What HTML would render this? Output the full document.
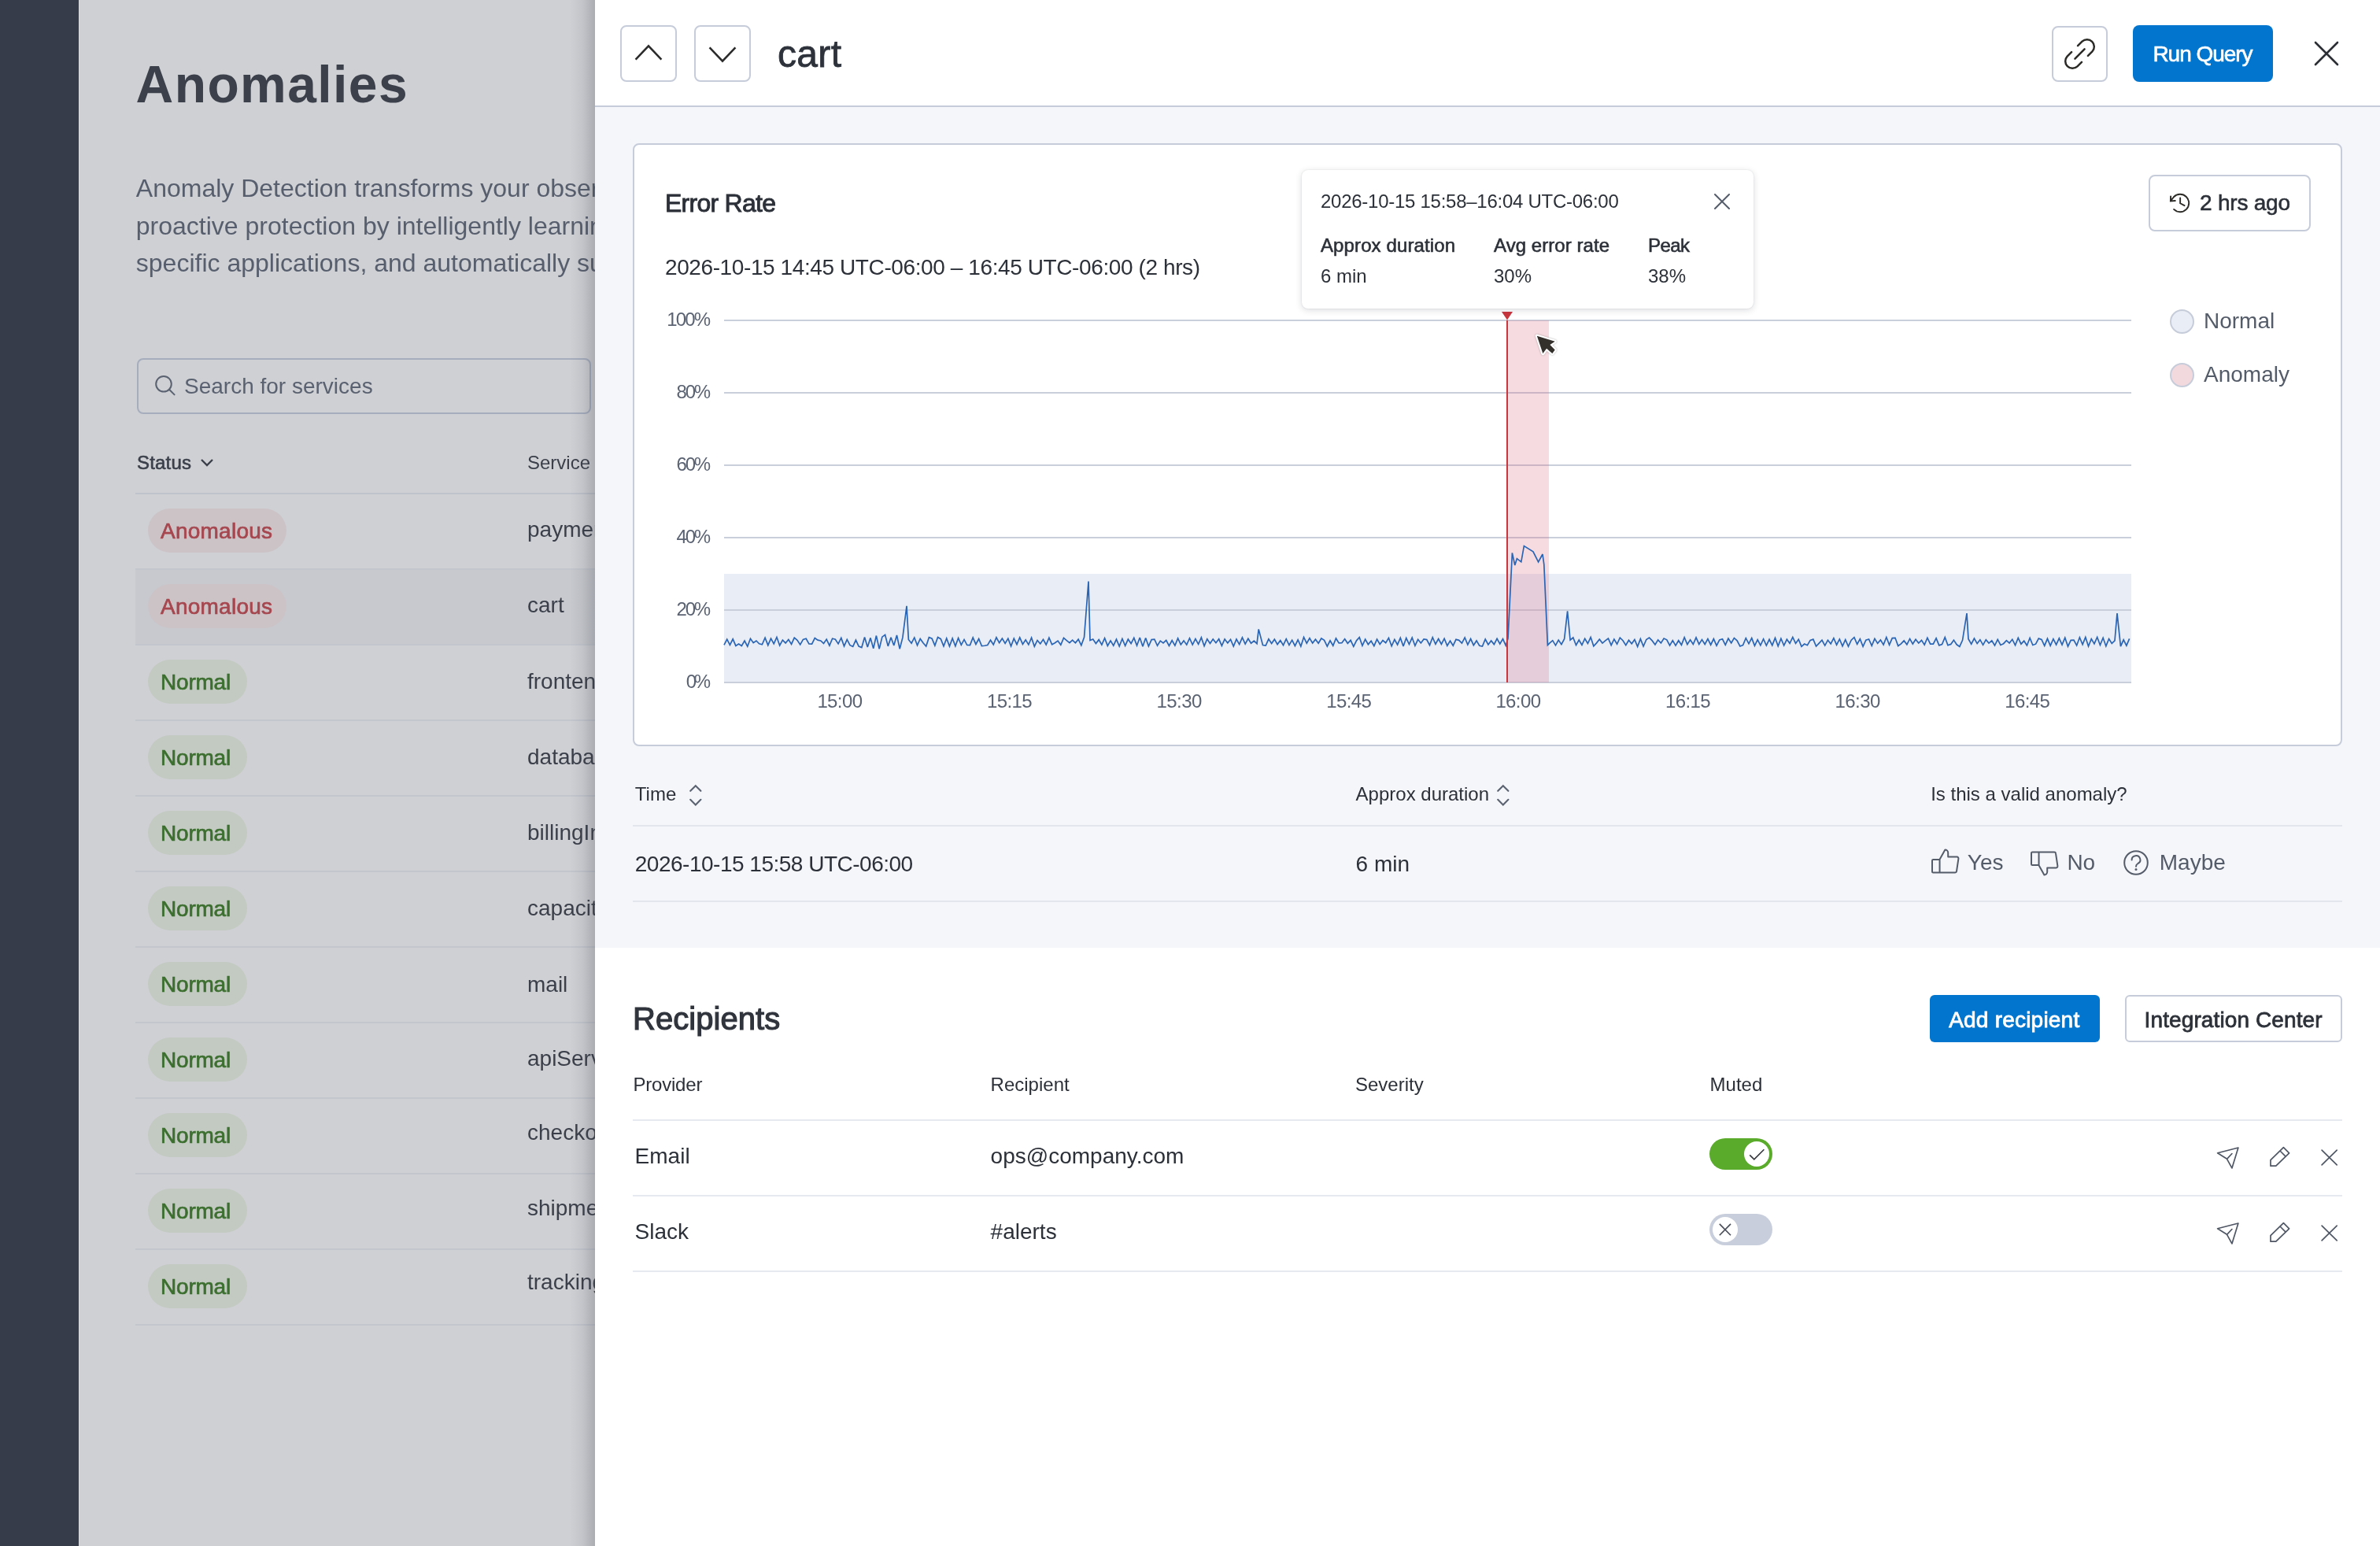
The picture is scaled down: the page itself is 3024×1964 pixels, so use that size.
<!DOCTYPE html><html><head><meta charset="utf-8"><style>
*{margin:0;padding:0;box-sizing:border-box}
html,body{width:100%;height:100%;overflow:hidden;background:#fff}
body{font-family:"Liberation Sans",sans-serif}
#root{zoom:1;position:relative;width:1512px;height:982px;overflow:hidden;will-change:transform}
@media (min-width:2000px){#root{zoom:2}}
.t{position:absolute;white-space:nowrap}
.b{position:absolute}
svg{position:absolute;overflow:visible}
</style></head><body><div id="root"><div class="b" style="left:0px;top:0px;width:50px;height:982px;background:#373c4a"></div>
<div class="b" style="left:50px;top:0px;width:328px;height:982px;background:#cfd0d4"></div>
<div class="b" style="left:50px;top:0px;width:0.5px;height:982px;background:#d9dadd"></div>
<div class="b" style="left:0;top:0;width:378px;height:982px;overflow:hidden"><div class="t" style="left:86.30px;top:37.12px;font-size:33px;line-height:33px;color:#3b404b;font-weight:bold;letter-spacing:0.702px;">Anomalies</div>
<div class="t" style="left:86.40px;top:111.33px;font-size:16px;line-height:16px;color:#575e6d;">Anomaly Detection transforms your observability practice into</div>
<div class="t" style="left:86.40px;top:135.28px;font-size:16px;line-height:16px;color:#575e6d;">proactive protection by intelligently learning the normal behavior of</div>
<div class="t" style="left:86.40px;top:159.23px;font-size:16px;line-height:16px;color:#575e6d;">specific applications, and automatically surfacing meaningful anomalies</div>
<div class="b" style="left:87px;top:227.5px;width:288.5px;height:35.5px;border:1px solid #a6aebe;border-radius:4px"></div>
<svg style="left:98.5px;top:238.5px" width="13" height="13" viewBox="0 0 13 13"><circle cx="5.5" cy="5.4" r="4.9" fill="none" stroke="#5a6170" stroke-width="1.0"/><line x1="9.0" y1="8.9" x2="12.3" y2="12.2" stroke="#5a6170" stroke-width="1.0" stroke-linecap="round"/></svg><div class="t" style="left:117.00px;top:238.27px;font-size:14px;line-height:14px;color:#5a6170;">Search for services</div>
<div class="t" style="left:87.00px;top:287.86px;font-size:12px;line-height:12px;color:#3a3f4a;letter-spacing:0.096px;-webkit-text-stroke:0.3px #3a3f4a;">Status</div>
<svg style="left:127px;top:291px" width="9" height="6" viewBox="0 0 9 6"><polyline points="1,1 4.5,4.5 8,1" fill="none" stroke="#3a3f4a" stroke-width="1.2"/></svg><div class="t" style="left:335.00px;top:287.86px;font-size:12px;line-height:12px;color:#3a3f4a;">Service name</div>
<div class="b" style="left:86px;top:313px;width:292px;height:1px;background:#bfc3cb"></div>
<div class="b" style="left:86px;top:361px;width:292px;height:1px;background:#c3c6cd"></div>
<div class="b" style="left:94px;top:323px;width:88px;height:28px;background:#ccc3c7;border-radius:14px"></div>
<div class="t" style="left:102.00px;top:330.47px;font-size:14px;line-height:14px;color:#a6474f;letter-spacing:0.120px;-webkit-text-stroke:0.35px #a6474f;">Anomalous</div>
<div class="t" style="left:335.00px;top:329.57px;font-size:14px;line-height:14px;color:#3a3f4a;">payment</div>
<div class="b" style="left:86px;top:362px;width:292px;height:47px;background:#c7c9ce"></div>
<div class="b" style="left:86px;top:409px;width:292px;height:1px;background:#c3c6cd"></div>
<div class="b" style="left:94px;top:371px;width:88px;height:28px;background:#ccc3c7;border-radius:14px"></div>
<div class="t" style="left:102.00px;top:378.47px;font-size:14px;line-height:14px;color:#a6474f;letter-spacing:0.120px;-webkit-text-stroke:0.35px #a6474f;">Anomalous</div>
<div class="t" style="left:335.00px;top:377.37px;font-size:14px;line-height:14px;color:#3a3f4a;">cart</div>
<div class="b" style="left:86px;top:457px;width:292px;height:1px;background:#c3c6cd"></div>
<div class="b" style="left:94px;top:419px;width:63px;height:28px;background:#c3cac2;border-radius:14px"></div>
<div class="t" style="left:102.00px;top:426.47px;font-size:14px;line-height:14px;color:#3c6f2f;letter-spacing:-0.103px;-webkit-text-stroke:0.35px #3c6f2f;">Normal</div>
<div class="t" style="left:335.00px;top:426.17px;font-size:14px;line-height:14px;color:#3a3f4a;">frontend</div>
<div class="b" style="left:86px;top:505px;width:292px;height:1px;background:#c3c6cd"></div>
<div class="b" style="left:94px;top:467px;width:63px;height:28px;background:#c3cac2;border-radius:14px"></div>
<div class="t" style="left:102.00px;top:474.47px;font-size:14px;line-height:14px;color:#3c6f2f;letter-spacing:-0.103px;-webkit-text-stroke:0.35px #3c6f2f;">Normal</div>
<div class="t" style="left:335.00px;top:473.77px;font-size:14px;line-height:14px;color:#3a3f4a;">database</div>
<div class="b" style="left:86px;top:553px;width:292px;height:1px;background:#c3c6cd"></div>
<div class="b" style="left:94px;top:515px;width:63px;height:28px;background:#c3cac2;border-radius:14px"></div>
<div class="t" style="left:102.00px;top:522.47px;font-size:14px;line-height:14px;color:#3c6f2f;letter-spacing:-0.103px;-webkit-text-stroke:0.35px #3c6f2f;">Normal</div>
<div class="t" style="left:335.00px;top:521.77px;font-size:14px;line-height:14px;color:#3a3f4a;">billingInfo</div>
<div class="b" style="left:86px;top:601px;width:292px;height:1px;background:#c3c6cd"></div>
<div class="b" style="left:94px;top:563px;width:63px;height:28px;background:#c3cac2;border-radius:14px"></div>
<div class="t" style="left:102.00px;top:570.47px;font-size:14px;line-height:14px;color:#3c6f2f;letter-spacing:-0.103px;-webkit-text-stroke:0.35px #3c6f2f;">Normal</div>
<div class="t" style="left:335.00px;top:569.82px;font-size:14px;line-height:14px;color:#3a3f4a;">capacity</div>
<div class="b" style="left:86px;top:649px;width:292px;height:1px;background:#c3c6cd"></div>
<div class="b" style="left:94px;top:611px;width:63px;height:28px;background:#c3cac2;border-radius:14px"></div>
<div class="t" style="left:102.00px;top:618.47px;font-size:14px;line-height:14px;color:#3c6f2f;letter-spacing:-0.103px;-webkit-text-stroke:0.35px #3c6f2f;">Normal</div>
<div class="t" style="left:335.00px;top:618.67px;font-size:14px;line-height:14px;color:#3a3f4a;">mail</div>
<div class="b" style="left:86px;top:697px;width:292px;height:1px;background:#c3c6cd"></div>
<div class="b" style="left:94px;top:659px;width:63px;height:28px;background:#c3cac2;border-radius:14px"></div>
<div class="t" style="left:102.00px;top:666.47px;font-size:14px;line-height:14px;color:#3c6f2f;letter-spacing:-0.103px;-webkit-text-stroke:0.35px #3c6f2f;">Normal</div>
<div class="t" style="left:335.00px;top:665.47px;font-size:14px;line-height:14px;color:#3a3f4a;">apiServer</div>
<div class="b" style="left:86px;top:745px;width:292px;height:1px;background:#c3c6cd"></div>
<div class="b" style="left:94px;top:707px;width:63px;height:28px;background:#c3cac2;border-radius:14px"></div>
<div class="t" style="left:102.00px;top:714.47px;font-size:14px;line-height:14px;color:#3c6f2f;letter-spacing:-0.103px;-webkit-text-stroke:0.35px #3c6f2f;">Normal</div>
<div class="t" style="left:335.00px;top:712.57px;font-size:14px;line-height:14px;color:#3a3f4a;">checkout</div>
<div class="b" style="left:86px;top:793px;width:292px;height:1px;background:#c3c6cd"></div>
<div class="b" style="left:94px;top:755px;width:63px;height:28px;background:#c3cac2;border-radius:14px"></div>
<div class="t" style="left:102.00px;top:762.47px;font-size:14px;line-height:14px;color:#3c6f2f;letter-spacing:-0.103px;-webkit-text-stroke:0.35px #3c6f2f;">Normal</div>
<div class="t" style="left:335.00px;top:760.57px;font-size:14px;line-height:14px;color:#3a3f4a;">shipment</div>
<div class="b" style="left:86px;top:841px;width:292px;height:1px;background:#c3c6cd"></div>
<div class="b" style="left:94px;top:803px;width:63px;height:28px;background:#c3cac2;border-radius:14px"></div>
<div class="t" style="left:102.00px;top:810.47px;font-size:14px;line-height:14px;color:#3c6f2f;letter-spacing:-0.103px;-webkit-text-stroke:0.35px #3c6f2f;">Normal</div>
<div class="t" style="left:335.00px;top:807.57px;font-size:14px;line-height:14px;color:#3a3f4a;">tracking</div>
</div><div class="b" style="left:362px;top:0px;width:16px;height:982px;background:linear-gradient(90deg,rgba(60,64,75,0) 0%,rgba(60,64,75,0.08) 50%,rgba(60,64,75,0.25) 100%)"></div>
<div class="b" style="left:378px;top:0px;width:1134px;height:982px;background:#fff"></div>
<div class="b" style="left:378px;top:68px;width:1134px;height:534px;background:#f5f6fa"></div>
<div class="b" style="left:378px;top:67px;width:1134px;height:1px;background:#c6ccd9"></div>
<div class="b" style="left:394px;top:16px;width:36px;height:36px;border:1px solid #c6ccd9;border-radius:4px;background:#fff"></div>
<div class="b" style="left:441px;top:16px;width:36px;height:36px;border:1px solid #c6ccd9;border-radius:4px;background:#fff"></div>
<svg style="left:394px;top:16px" width="36" height="36"><polyline points="9.8,21.8 18,13.2 26.2,21.8" fill="none" stroke="#2b2b2b" stroke-width="1.3"/></svg><svg style="left:441px;top:16px" width="36" height="36"><polyline points="9.8,14.2 18,22.8 26.2,14.2" fill="none" stroke="#2b2b2b" stroke-width="1.3"/></svg><div class="t" style="left:494.00px;top:22.52px;font-size:24px;line-height:24px;color:#2d323b;letter-spacing:0.164px;-webkit-text-stroke:0.4px #2d323b;">cart</div>
<div class="b" style="left:1303.5px;top:16.4px;width:35.5px;height:35.5px;border:1px solid #c6ccd9;border-radius:4px;background:#fff"></div>
<svg style="left:1303.5px;top:16.4px" width="36" height="36"><path d="M16.51 12.55 L19.27 9.80 A4.55 4.55 0 0 1 25.70 16.23 L22.95 18.99 M18.99 22.95 L16.23 25.70 A4.55 4.55 0 0 1 9.80 19.27 L12.55 16.51 M14.71 20.79 L20.79 14.71" fill="none" stroke="#2b2a26" stroke-width="1.25" stroke-linecap="round"/></svg><div class="b" style="left:1355px;top:16px;width:89px;height:36px;background:#0276cf;border-radius:4px"></div>
<div class="t" style="left:1367.70px;top:27.27px;font-size:14px;line-height:14px;color:#ffffff;letter-spacing:-0.512px;-webkit-text-stroke:0.3px #ffffff;">Run Query</div>
<svg style="left:1470.5px;top:26.5px" width="15" height="15"><path d="M0.5 0.5 L14.5 14.5 M14.5 0.5 L0.5 14.5" stroke="#2b2e34" stroke-width="1.3" stroke-linecap="round"/></svg><div class="b" style="left:402px;top:91px;width:1086px;height:383px;background:#fff;border:1px solid #c6ccd9;border-radius:4px"></div>
<div class="t" style="left:422.50px;top:120.78px;font-size:16px;line-height:16px;color:#2c3038;letter-spacing:-0.366px;-webkit-text-stroke:0.45px #2c3038;">Error Rate</div>
<div class="t" style="left:422.50px;top:163.17px;font-size:14px;line-height:14px;color:#2c3038;letter-spacing:-0.200px;">2026-10-15 14:45 UTC-06:00 – 16:45 UTC-06:00 (2 hrs)</div>
<div class="t" style="left:423.67px;top:197.01px;font-size:12px;line-height:12px;color:#5b6373;letter-spacing:-0.921px;">100%</div>
<div class="t" style="left:429.74px;top:243.01px;font-size:12px;line-height:12px;color:#5b6373;letter-spacing:-1.081px;">80%</div>
<div class="t" style="left:429.74px;top:289.01px;font-size:12px;line-height:12px;color:#5b6373;letter-spacing:-1.081px;">60%</div>
<div class="t" style="left:429.74px;top:335.01px;font-size:12px;line-height:12px;color:#5b6373;letter-spacing:-1.081px;">40%</div>
<div class="t" style="left:429.74px;top:381.01px;font-size:12px;line-height:12px;color:#5b6373;letter-spacing:-1.081px;">20%</div>
<div class="t" style="left:435.82px;top:427.01px;font-size:12px;line-height:12px;color:#5b6373;letter-spacing:-1.561px;">0%</div>
<div class="b" style="left:460px;top:364.3px;width:894px;height:68.94999999999999px;background:#e9edf5"></div>
<div class="b" style="left:460px;top:202.75px;width:894px;height:1px;background:#c9cfdb"></div>
<div class="b" style="left:460px;top:248.75px;width:894px;height:1px;background:#c9cfdb"></div>
<div class="b" style="left:460px;top:294.75px;width:894px;height:1px;background:#c9cfdb"></div>
<div class="b" style="left:460px;top:340.75px;width:894px;height:1px;background:#c9cfdb"></div>
<div class="b" style="left:460px;top:386.75px;width:894px;height:1px;background:#c9cfdb"></div>
<div class="b" style="left:460px;top:432.75px;width:894px;height:1px;background:#c9cfdb"></div>
<div class="b" style="left:957.5px;top:203.5px;width:26.4px;height:229.75px;background:rgba(214,96,120,0.22)"></div>
<div class="t" style="left:519.19px;top:439.26px;font-size:12px;line-height:12px;color:#5b6373;letter-spacing:-0.300px;">15:00</div>
<div class="t" style="left:626.99px;top:439.26px;font-size:12px;line-height:12px;color:#5b6373;letter-spacing:-0.300px;">15:15</div>
<div class="t" style="left:734.79px;top:439.26px;font-size:12px;line-height:12px;color:#5b6373;letter-spacing:-0.300px;">15:30</div>
<div class="t" style="left:842.59px;top:439.26px;font-size:12px;line-height:12px;color:#5b6373;letter-spacing:-0.300px;">15:45</div>
<div class="t" style="left:950.19px;top:439.26px;font-size:12px;line-height:12px;color:#5b6373;letter-spacing:-0.300px;">16:00</div>
<div class="t" style="left:1057.99px;top:439.26px;font-size:12px;line-height:12px;color:#5b6373;letter-spacing:-0.300px;">16:15</div>
<div class="t" style="left:1165.79px;top:439.26px;font-size:12px;line-height:12px;color:#5b6373;letter-spacing:-0.300px;">16:30</div>
<div class="t" style="left:1273.59px;top:439.26px;font-size:12px;line-height:12px;color:#5b6373;letter-spacing:-0.300px;">16:45</div>
<svg style="left:0;top:0" width="1512" height="982"><polyline points="460.00,409.65 461.86,406.02 463.72,409.71 465.58,405.91 467.44,410.21 469.30,409.03 471.16,410.25 473.02,407.04 474.88,410.62 476.74,405.66 478.60,408.33 480.46,407.00 482.32,408.88 484.18,409.42 486.04,405.11 487.90,409.84 489.76,405.55 491.62,408.97 493.48,404.74 495.34,410.00 497.20,406.59 499.06,408.46 500.92,406.18 502.78,409.23 504.64,405.10 506.50,406.64 508.36,409.43 510.22,406.19 512.08,405.62 513.94,408.95 515.80,409.10 517.66,405.31 519.52,406.55 521.38,407.00 523.24,408.72 525.10,406.06 526.96,410.06 528.82,405.59 530.68,406.13 532.54,408.95 534.40,405.20 536.26,410.43 538.12,406.19 539.98,409.85 541.84,410.68 543.70,406.52 545.56,410.54 547.42,411.26 549.28,404.71 551.14,411.01 553.00,405.19 554.86,411.86 556.72,403.78 558.58,412.19 560.44,404.58 562.30,403.21 564.16,410.44 566.02,404.91 567.88,409.96 569.74,403.49 571.60,412.11 573.46,404.97 576.00,384.95 577.18,406.25 579.04,408.61 580.90,404.99 582.76,409.88 584.62,405.73 586.48,408.38 588.34,410.49 590.20,404.82 592.06,405.61 593.92,410.06 595.78,404.73 597.64,405.83 599.50,410.47 601.36,405.45 603.22,410.50 605.08,405.49 606.94,410.40 608.80,405.24 610.66,409.68 612.52,406.22 614.38,409.77 616.24,409.84 618.10,405.02 619.96,409.23 621.82,405.74 623.68,410.32 625.54,410.11 627.40,409.75 629.26,406.59 631.12,409.50 632.98,404.92 634.84,408.32 636.70,405.51 638.56,408.70 640.42,405.55 642.28,410.45 644.14,405.54 646.00,409.34 647.86,404.94 649.72,409.22 651.58,406.38 653.44,409.49 655.30,405.10 657.16,410.59 659.02,406.74 660.88,408.96 662.74,406.15 664.60,409.49 666.46,405.12 668.32,409.39 670.18,408.37 672.04,407.04 673.90,409.67 675.76,405.23 677.62,406.82 679.48,408.35 681.34,406.57 683.20,408.41 685.06,406.07 686.92,409.88 688.78,404.83 691.50,369.31 692.50,406.71 694.36,406.00 696.22,408.73 698.08,406.31 699.94,409.55 701.80,405.32 703.66,410.21 705.52,406.93 707.38,410.04 709.24,406.05 711.10,410.49 712.96,405.77 714.82,410.22 716.68,406.03 718.54,408.79 720.40,405.17 722.26,410.03 724.12,404.97 725.98,410.66 727.84,405.24 729.70,410.49 731.56,406.30 733.42,406.08 735.28,410.15 737.14,407.08 739.00,408.45 740.86,406.73 742.72,410.20 744.58,406.79 746.44,410.04 748.30,405.48 750.16,409.48 752.02,406.94 753.88,409.57 755.74,405.38 757.60,409.56 759.46,405.79 761.32,409.22 763.18,404.97 765.04,410.35 766.90,405.88 768.76,408.78 770.62,405.93 772.48,408.36 774.34,405.90 776.20,410.23 778.06,405.96 779.92,408.45 781.78,406.15 783.64,410.53 785.50,406.00 787.36,409.34 789.22,404.97 791.08,409.06 792.94,405.65 794.80,408.61 796.66,407.09 798.52,408.84 799.60,399.67 802.24,409.79 804.10,410.06 805.96,405.91 807.82,408.77 809.68,406.09 811.54,409.29 813.40,406.76 815.26,409.82 817.12,405.87 818.98,409.77 820.84,406.58 822.70,410.25 824.56,406.38 826.42,410.52 828.28,404.73 830.14,408.62 832.00,405.39 833.86,408.53 835.72,406.13 837.58,408.60 839.44,405.49 841.30,406.66 843.16,410.50 845.02,406.87 846.88,410.13 848.74,405.49 850.60,408.47 852.46,408.39 854.32,405.90 856.18,408.65 858.04,406.65 859.90,410.69 861.76,406.91 863.62,404.85 865.48,410.14 867.34,406.02 869.20,409.33 871.06,407.11 872.92,410.33 874.78,406.05 876.64,409.27 878.50,406.75 880.36,408.33 882.22,405.21 884.08,410.37 885.94,406.17 887.80,409.51 889.66,405.20 891.52,410.50 893.38,405.27 895.24,409.27 897.10,405.02 898.96,410.15 900.82,406.17 902.68,408.47 904.54,406.01 906.40,406.29 908.26,409.80 910.12,404.86 911.98,409.11 913.84,405.77 915.70,409.24 917.56,405.59 919.42,410.13 921.28,407.09 923.14,410.08 925.00,406.18 926.86,406.67 928.72,408.53 930.58,404.96 932.44,409.52 934.30,405.77 936.16,409.84 938.02,406.96 939.88,410.13 941.74,410.54 943.60,406.01 945.46,409.49 947.32,407.00 949.18,409.31 951.04,405.70 952.90,408.99 954.76,405.79 956.62,410.03 958.00,405.60 960.70,351.20 962.40,359.00 963.70,354.80 966.40,356.90 968.20,346.80 974.00,350.40 977.30,357.00 980.00,352.00 980.90,358.60 983.20,409.80 984.52,408.42 986.38,406.84 988.24,409.91 990.10,406.51 991.96,409.31 993.82,405.86 995.80,388.17 997.54,406.57 999.40,404.99 1001.26,409.80 1003.12,406.49 1004.98,409.66 1006.84,405.62 1008.70,408.75 1010.56,404.78 1012.42,410.42 1014.28,408.44 1016.14,406.12 1018.00,408.54 1019.86,406.97 1021.72,405.51 1023.58,409.82 1025.44,405.99 1027.30,409.13 1029.16,405.12 1031.02,406.86 1032.88,409.80 1034.74,406.63 1036.60,408.92 1038.46,406.25 1040.32,410.68 1042.18,405.82 1044.04,410.52 1045.90,406.25 1047.76,405.03 1049.62,406.94 1051.48,409.47 1053.34,406.42 1055.20,408.48 1057.06,405.55 1058.92,406.41 1060.78,409.97 1062.64,406.80 1064.50,410.05 1066.36,406.86 1068.22,409.67 1070.08,404.88 1071.94,409.35 1073.80,406.41 1075.66,409.26 1077.52,404.98 1079.38,409.17 1081.24,406.27 1083.10,409.23 1084.96,405.78 1086.82,409.60 1088.68,405.79 1090.54,410.13 1092.40,406.47 1094.26,405.90 1096.12,409.67 1097.98,405.57 1099.84,408.45 1101.70,405.24 1103.56,406.95 1105.42,410.47 1107.28,409.83 1109.14,405.34 1111.00,408.89 1112.86,405.30 1114.72,410.14 1116.58,406.33 1118.44,409.92 1120.30,405.85 1122.16,410.01 1124.02,406.15 1125.88,409.91 1127.74,405.20 1129.60,410.44 1131.46,405.60 1133.32,410.01 1135.18,406.13 1137.04,408.65 1138.90,404.75 1140.76,408.70 1142.62,406.12 1144.48,410.64 1146.34,409.04 1148.20,409.86 1150.06,406.71 1151.92,406.04 1153.78,410.49 1155.64,408.56 1157.50,406.62 1159.36,410.03 1161.22,406.60 1163.08,408.97 1164.94,405.32 1166.80,409.62 1168.66,405.99 1170.52,410.44 1172.38,406.32 1174.24,410.61 1176.10,406.61 1177.96,404.86 1179.82,409.22 1181.68,405.90 1183.54,410.69 1185.40,406.57 1187.26,406.00 1189.12,410.22 1190.98,405.68 1192.84,408.67 1194.70,406.52 1196.56,409.54 1198.42,404.75 1200.28,409.59 1202.14,405.28 1204.00,405.16 1205.86,410.28 1207.72,408.95 1209.58,406.91 1211.44,409.43 1213.30,405.73 1215.16,409.03 1217.02,406.14 1218.88,408.51 1220.74,406.64 1222.60,409.56 1224.46,405.14 1226.32,409.05 1228.18,409.03 1230.04,405.42 1231.90,409.95 1233.76,409.25 1235.62,404.81 1237.48,409.87 1239.34,409.21 1241.20,406.57 1243.06,409.40 1244.92,410.69 1246.78,406.65 1249.50,389.55 1250.50,405.84 1252.36,409.11 1254.22,405.53 1256.08,408.78 1257.94,406.35 1259.80,409.65 1261.66,406.34 1263.52,408.52 1265.38,406.92 1267.24,410.01 1269.10,406.17 1270.96,409.73 1272.82,408.84 1274.68,406.85 1276.54,408.47 1278.40,406.11 1280.26,409.86 1282.12,405.16 1283.98,409.10 1285.84,407.11 1287.70,409.99 1289.56,405.24 1291.42,409.76 1293.28,409.09 1295.14,405.57 1297.00,406.23 1298.86,410.20 1300.72,405.67 1302.58,410.15 1304.44,405.82 1306.30,409.50 1308.16,405.42 1310.02,409.54 1311.88,405.13 1313.74,410.58 1315.60,406.67 1317.46,406.55 1319.32,409.98 1321.18,404.90 1323.04,409.41 1324.90,404.79 1326.76,410.48 1328.62,405.79 1330.48,408.93 1332.34,404.75 1334.20,409.75 1336.06,405.15 1337.92,410.46 1339.78,405.76 1341.64,408.74 1343.50,406.96 1345.00,389.55 1347.22,410.56 1349.08,406.40 1350.94,410.08 1352.80,405.72" fill="none" stroke="#2a64b4" stroke-width="0.85" stroke-linejoin="miter" stroke-miterlimit="3"/></svg><div class="b" style="left:956.9px;top:203.5px;width:1.2px;height:229.75px;background:#c8363e"></div>
<svg style="left:953.9px;top:197.9px" width="7" height="7"><polygon points="0,0 7,0 3.5,5.2" fill="#c8363e"/></svg><svg style="left:0;top:0" width="1512" height="982"><path d="M976.43 213.35 L987.86 216.86 L984.69 219.01 L987.86 222.29 L986.16 224.45 L982.54 221.39 L980.17 224.56 Z" fill="#33302c" stroke="#fff" stroke-width="2.1" stroke-linejoin="round" paint-order="stroke" style="filter:drop-shadow(0.2px 0.5px 0.5px rgba(0,0,0,0.3))"/></svg><div class="b" style="left:827px;top:108px;width:287px;height:88px;background:#fff;border-radius:4px;box-shadow:0 1px 4px rgba(30,40,60,0.16),0 0 1px rgba(30,40,60,0.12)"></div>
<div class="t" style="left:839.00px;top:121.76px;font-size:12px;line-height:12px;color:#2c3038;letter-spacing:-0.132px;">2026-10-15 15:58–16:04 UTC-06:00</div>
<svg style="left:1089px;top:123px" width="10" height="10"><path d="M0.5 0.5 L9.5 9.5 M9.5 0.5 L0.5 9.5" stroke="#555c69" stroke-width="1" stroke-linecap="round"/></svg><div class="t" style="left:839.00px;top:149.86px;font-size:12px;line-height:12px;color:#2c3038;letter-spacing:0.055px;-webkit-text-stroke:0.3px #2c3038;">Approx duration</div>
<div class="t" style="left:839.00px;top:169.56px;font-size:12px;line-height:12px;color:#2c3038;">6 min</div>
<div class="t" style="left:949.00px;top:149.86px;font-size:12px;line-height:12px;color:#2c3038;letter-spacing:0.027px;-webkit-text-stroke:0.3px #2c3038;">Avg error rate</div>
<div class="t" style="left:949.00px;top:169.56px;font-size:12px;line-height:12px;color:#2c3038;">30%</div>
<div class="t" style="left:1047.00px;top:149.86px;font-size:12px;line-height:12px;color:#2c3038;letter-spacing:-0.284px;-webkit-text-stroke:0.3px #2c3038;">Peak</div>
<div class="t" style="left:1047.00px;top:169.56px;font-size:12px;line-height:12px;color:#2c3038;">38%</div>
<div class="b" style="left:1365px;top:111px;width:103px;height:36px;background:#fff;border:1px solid #c6ccd9;border-radius:4px"></div>
<svg style="left:1384.9px;top:128.95px" width="1" height="1"><path d="M-4.03 -3.89 A5.6 5.6 0 1 1 -3.96 3.96 M-6.05 -1.3 L-4.03 -3.89 M-5.95 -4.3 L-6.05 -1.3 L-3.1 -1.5 M0.07 -3.3 L0.07 0.14 L2.77 1.57" fill="none" stroke="#2b2a26" stroke-width="0.95" stroke-linecap="round"/></svg><div class="t" style="left:1397.50px;top:122.17px;font-size:14px;line-height:14px;color:#2c3038;letter-spacing:-0.109px;-webkit-text-stroke:0.3px #2c3038;">2 hrs ago</div>
<div class="b" style="left:1378.3px;top:196.3px;width:15.5px;height:15.5px;background:#e9edf5;border:1px solid #c6ccd9;border-radius:50%"></div>
<div class="t" style="left:1400.00px;top:197.17px;font-size:14px;line-height:14px;color:#555c69;">Normal</div>
<div class="b" style="left:1378.3px;top:230.3px;width:15.5px;height:15.5px;background:#f2d9de;border:1px solid #c6ccd9;border-radius:50%"></div>
<div class="t" style="left:1400.00px;top:231.17px;font-size:14px;line-height:14px;color:#555c69;">Anomaly</div>
<div class="t" style="left:403.40px;top:498.66px;font-size:12px;line-height:12px;color:#2c3038;letter-spacing:0.026px;">Time</div>
<svg style="left:438.2px;top:498.4px" width="8" height="14"><polyline points="0.6,3.9 3.9,0.6 7.2,3.9" fill="none" stroke="#5b6270" stroke-width="1.05" stroke-linecap="round"/><polyline points="0.6,9.4 3.9,12.7 7.2,9.4" fill="none" stroke="#5b6270" stroke-width="1.05" stroke-linecap="round"/></svg><div class="t" style="left:861.30px;top:498.66px;font-size:12px;line-height:12px;color:#2c3038;">Approx duration</div>
<svg style="left:951px;top:498.4px" width="8" height="14"><polyline points="0.6,3.9 3.9,0.6 7.2,3.9" fill="none" stroke="#5b6270" stroke-width="1.05" stroke-linecap="round"/><polyline points="0.6,9.4 3.9,12.7 7.2,9.4" fill="none" stroke="#5b6270" stroke-width="1.05" stroke-linecap="round"/></svg><div class="t" style="left:1226.60px;top:498.66px;font-size:12px;line-height:12px;color:#2c3038;">Is this a valid anomaly?</div>
<div class="b" style="left:402px;top:524.2px;width:1086px;height:1px;background:#e3e6ec"></div>
<div class="t" style="left:403.40px;top:542.17px;font-size:14px;line-height:14px;color:#2c3038;letter-spacing:-0.248px;">2026-10-15 15:58 UTC-06:00</div>
<div class="t" style="left:861.30px;top:542.17px;font-size:14px;line-height:14px;color:#2c3038;">6 min</div>
<div class="b" style="left:402px;top:572px;width:1086px;height:1px;background:#e3e6ec"></div>
<svg style="left:1227px;top:539.5px" width="18" height="16"><path d="M5.27 6.5 H1.1 a0.6 0.6 0 0 0 -0.6 0.6 V14.1 a0.6 0.6 0 0 0 0.6 0.6 H5.27 Z M5.27 14.7 H15.1 a0.9 0.9 0 0 0 0.9 -0.8 L17.2 5.9 a0.9 0.9 0 0 0 -0.9 -1.1 H10.6 V2.2 a1.9 1.9 0 0 0 -1.9 -1.9 L5.27 6.4 Z" fill="none" stroke="#555c69" stroke-width="1" stroke-linejoin="round"/></svg><div class="t" style="left:1249.90px;top:541.17px;font-size:14px;line-height:14px;color:#555c69;">Yes</div>
<svg style="left:1290.1px;top:540.0px;transform:scale(1,-1)" width="18" height="16"><path d="M5.27 6.5 H1.1 a0.6 0.6 0 0 0 -0.6 0.6 V14.1 a0.6 0.6 0 0 0 0.6 0.6 H5.27 Z M5.27 14.7 H15.1 a0.9 0.9 0 0 0 0.9 -0.8 L17.2 5.9 a0.9 0.9 0 0 0 -0.9 -1.1 H10.6 V2.2 a1.9 1.9 0 0 0 -1.9 -1.9 L5.27 6.4 Z" fill="none" stroke="#555c69" stroke-width="1" stroke-linejoin="round"/></svg><div class="t" style="left:1313.20px;top:541.17px;font-size:14px;line-height:14px;color:#555c69;">No</div>
<svg style="left:1357.05px;top:547.9px" width="1" height="1"><circle cx="0" cy="0" r="7.4" fill="none" stroke="#555c69" stroke-width="1"/><path d="M-2.7 -1.8 a2.7 2.6 0 1 1 3.9 2.3 c-0.9 0.5 -1.2 0.9 -1.2 1.9" fill="none" stroke="#555c69" stroke-width="1" stroke-linecap="round"/><circle cx="0" cy="4.2" r="0.75" fill="#555c69"/></svg><div class="t" style="left:1371.90px;top:541.17px;font-size:14px;line-height:14px;color:#555c69;">Maybe</div>
<div class="t" style="left:402.00px;top:636.95px;font-size:20px;line-height:20px;color:#30343c;letter-spacing:0.024px;-webkit-text-stroke:0.6px #30343c;">Recipients</div>
<div class="b" style="left:1226px;top:632px;width:108px;height:30px;background:#0276cf;border-radius:3px"></div>
<div class="t" style="left:1238.10px;top:640.87px;font-size:14px;line-height:14px;color:#ffffff;letter-spacing:0.107px;-webkit-text-stroke:0.4px #ffffff;">Add recipient</div>
<div class="b" style="left:1350px;top:632px;width:138px;height:30px;background:#fff;border:1px solid #c6ccd9;border-radius:3px"></div>
<div class="t" style="left:1362.30px;top:640.87px;font-size:14px;line-height:14px;color:#2c3038;letter-spacing:0.055px;-webkit-text-stroke:0.4px #2c3038;">Integration Center</div>
<div class="t" style="left:402.20px;top:682.86px;font-size:12px;line-height:12px;color:#2c3038;letter-spacing:-0.098px;">Provider</div>
<div class="t" style="left:629.30px;top:682.86px;font-size:12px;line-height:12px;color:#2c3038;">Recipient</div>
<div class="t" style="left:861.00px;top:682.86px;font-size:12px;line-height:12px;color:#2c3038;">Severity</div>
<div class="t" style="left:1086.30px;top:682.86px;font-size:12px;line-height:12px;color:#2c3038;">Muted</div>
<div class="b" style="left:402px;top:711px;width:1086px;height:1px;background:#e6e9ef"></div>
<div class="t" style="left:403.30px;top:727.37px;font-size:14px;line-height:14px;color:#2c3038;">Email</div>
<div class="t" style="left:629.30px;top:727.37px;font-size:14px;line-height:14px;color:#2c3038;">ops@company.com</div>
<div class="b" style="left:402px;top:759px;width:1086px;height:1px;background:#e6e9ef"></div>
<svg style="left:1408px;top:728.6px" width="16" height="16"><path d="M0.8 3.9 L13.95 0.5 L9.95 13.45 L6.77 7.66 Z M6.77 7.66 L9.96 4.27" fill="none" stroke="#4f5664" stroke-width="0.85" stroke-linejoin="round" stroke-linecap="round"/></svg><svg style="left:1442px;top:728.6px" width="14" height="14"><path d="M0.5 8.3 L8.7 0.3 L12.3 3.9 L3.9 12.1 H0.5 Z M6.5 2.5 L9.9 5.9" fill="none" stroke="#4f5664" stroke-width="0.85" stroke-linejoin="round"/></svg><svg style="left:1475px;top:730.3000000000001px" width="10" height="10"><path d="M0.05 0.05 L9.6 9.4 M9.6 0.05 L0.05 9.4" fill="none" stroke="#4f5664" stroke-width="0.85" stroke-linecap="round"/></svg><div class="t" style="left:403.30px;top:775.37px;font-size:14px;line-height:14px;color:#2c3038;">Slack</div>
<div class="t" style="left:629.30px;top:775.37px;font-size:14px;line-height:14px;color:#2c3038;">#alerts</div>
<div class="b" style="left:402px;top:807px;width:1086px;height:1px;background:#e6e9ef"></div>
<svg style="left:1408px;top:776.6px" width="16" height="16"><path d="M0.8 3.9 L13.95 0.5 L9.95 13.45 L6.77 7.66 Z M6.77 7.66 L9.96 4.27" fill="none" stroke="#4f5664" stroke-width="0.85" stroke-linejoin="round" stroke-linecap="round"/></svg><svg style="left:1442px;top:776.6px" width="14" height="14"><path d="M0.5 8.3 L8.7 0.3 L12.3 3.9 L3.9 12.1 H0.5 Z M6.5 2.5 L9.9 5.9" fill="none" stroke="#4f5664" stroke-width="0.85" stroke-linejoin="round"/></svg><svg style="left:1475px;top:778.3000000000001px" width="10" height="10"><path d="M0.05 0.05 L9.6 9.4 M9.6 0.05 L0.05 9.4" fill="none" stroke="#4f5664" stroke-width="0.85" stroke-linecap="round"/></svg><div class="b" style="left:1086px;top:723px;width:40px;height:20px;background:#5aab2b;border-radius:10px"></div>
<div class="b" style="left:1108px;top:725px;width:16px;height:16px;background:#fff;border-radius:50%"></div>
<svg style="left:0;top:0" width="1512" height="982"><polyline points="1111.6,733.7 1114.4,736.45 1120.7,730.1" fill="none" stroke="#33363c" stroke-width="0.8"/></svg><div class="b" style="left:1086px;top:771px;width:40px;height:20px;background:#c8cedb;border-radius:10px"></div>
<div class="b" style="left:1088px;top:773px;width:16px;height:16px;background:#fff;border-radius:50%"></div>
<svg style="left:0;top:0" width="1512" height="982"><path d="M1092.4 777.45 L1099.5 784.6 M1099.5 777.45 L1092.4 784.6" fill="none" stroke="#454a55" stroke-width="0.8"/></svg></div></body></html>
